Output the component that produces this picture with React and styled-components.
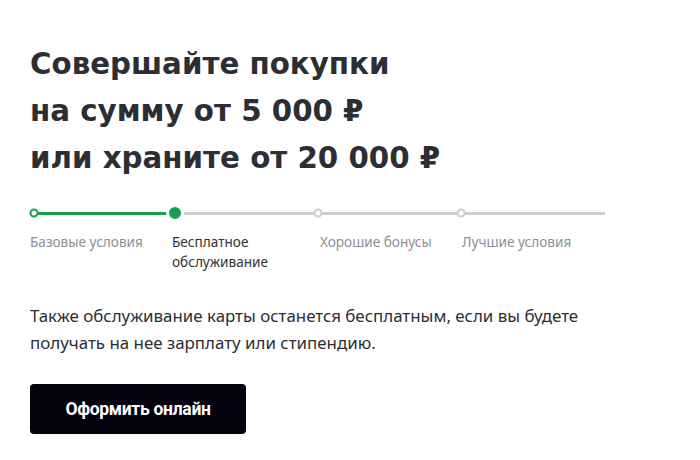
import React from "react";
import styled, { createGlobalStyle } from "styled-components";

const Global = createGlobalStyle`
  html, body { margin: 0; padding: 0; background: #fff; }
  body { font-family: "Noto Sans", "Open Sans", sans-serif; }
`;

const Page = styled.div`
  padding: 41px 30px 0 30px;
  width: 700px;
  box-sizing: border-box;
`;

const Title = styled.h1`
  margin: 0;
  font-family: "DejaVu Sans", sans-serif;
  font-weight: 700;
  font-size: 29.3px;
  line-height: 47px;
  color: #2c2e33;
`;

const Steps = styled.div`
  margin-top: 24px;
  width: 575px;
`;

const Track = styled.div`
  position: relative;
  height: 14px;
  display: flex;
  align-items: center;
`;

const Line = styled.div`
  height: 3px;
  background: ${(p) => p.$color};
  width: ${(p) => p.$w}px;
  flex: ${(p) => (p.$w ? "none" : "1")};
`;

const Dot = styled.span`
  position: absolute;
  top: 50%;
  left: ${(p) => p.$x}px;
  transform: translate(-50%, -50%);
  box-sizing: border-box;
  border-radius: 50%;
  ${(p) =>
    p.$active
      ? `width: 18px; height: 18px; background: #14a050; border: 3px solid #fff;`
      : `width: 9px; height: 9px; background: #fff; border: 2px solid ${p.$done ? "#14a050" : "#cdced3"};`}
`;

const Labels = styled.div`
  display: grid;
  grid-template-columns: 142px 148px 142px 143px;
  margin-top: 12px;
`;

const Label = styled.div`
  font-size: 13.6px;
  line-height: 20px;
  color: ${(p) => (p.$active ? "#333" : "#8d8f94")};
`;

const Text = styled.p`
  margin: 30px 0 0 0;
  font-size: 16.9px;
  line-height: 27px;
  color: #2c2e33;
`;

const Button = styled.button`
  display: block;
  margin-top: 28px;
  width: 216px;
  height: 50px;
  border: none;
  border-radius: 4px;
  background: #04020f;
  color: #fff;
  font-family: "Roboto", sans-serif;
  font-weight: 700;
  font-size: 17.5px;
  letter-spacing: -0.3px;
  cursor: pointer;
`;

export default function App() {
  return (
    <>
      <Global />
      <Page>
        <Title>
          Совершайте покупки
          <br />
          на сумму от 5 000 ₽
          <br />
          или храните от 20 000 ₽
        </Title>
        <Steps>
          <Track>
            <Line $color="#14a050" $w={145} />
            <Line $color="#cdced3" />
            <Dot $x={4} $done />
            <Dot $x={145} $active />
            <Dot $x={288} />
            <Dot $x={431} />
          </Track>
          <Labels>
            <Label>Базовые условия</Label>
            <Label $active>
              Бесплатное
              <br />
              обслуживание
            </Label>
            <Label>Хорошие бонусы</Label>
            <Label>Лучшие условия</Label>
          </Labels>
        </Steps>
        <Text>
          Также обслуживание карты останется бесплатным, если вы будете
          <br />
          получать на нее зарплату или стипендию.
        </Text>
        <Button>Оформить онлайн</Button>
      </Page>
    </>
  );
}
